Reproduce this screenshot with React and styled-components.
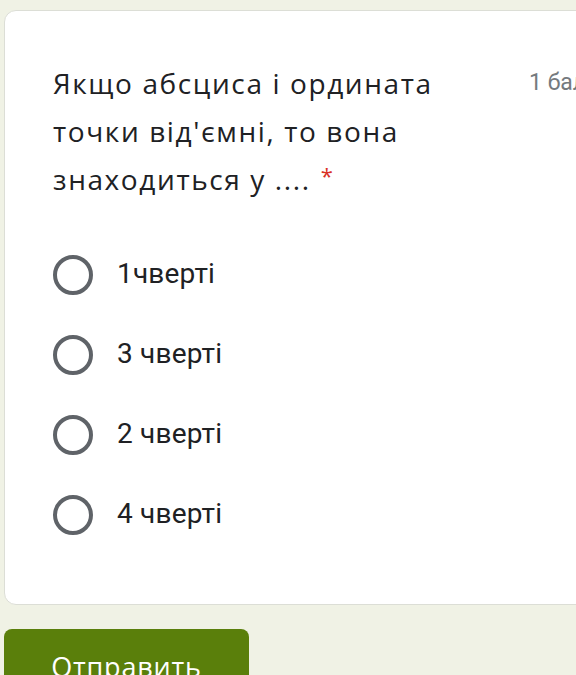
import React, { useState } from "react";
import styled, { createGlobalStyle } from "styled-components";

const opciones = ["1чверті", "3 чверті", "2 чверті", "4 чверті"];

const App = () => {
  const [elegida, setElegida] = useState(null);

  return (
    <>
      <Global />
      <Pagina>
        <Tarjeta>
          <Cabecera>
            <Pregunta>
              Якщо абсциса і ордината точки від'ємні, то вона знаходиться у ....
              <Asterisco>*</Asterisco>
            </Pregunta>
            <Puntos>1 бал</Puntos>
          </Cabecera>
          <Lista>
            {opciones.map((texto, i) => (
              <Opcion key={texto} onClick={() => setElegida(i)}>
                <Radio activo={elegida === i} />
                <Etiqueta>{texto}</Etiqueta>
              </Opcion>
            ))}
          </Lista>
        </Tarjeta>
        <Boton type="button">Отправить</Boton>
      </Pagina>
    </>
  );
};

const Global = createGlobalStyle`
  body {
    margin: 0;
    background: #f0f2e5;
    font-family: Roboto, "Noto Sans", sans-serif;
    overflow: hidden;
  }
`;

const Pagina = styled.div`
  padding: 10px 0 0 4px;
  display: flex;
  flex-direction: column;
  align-items: flex-start;
`;

const Tarjeta = styled.div`
  box-sizing: border-box;
  width: 640px;
  height: 595px;
  background: #fff;
  border: 1px solid #dcded6;
  border-radius: 12px;
  padding: 48px 0 0 48px;
`;

const Cabecera = styled.div`
  display: flex;
  align-items: flex-start;
`;

const Pregunta = styled.div`
  width: 430px;
  font-family: "Open Sans", Roboto, sans-serif;
  font-size: 28px;
  letter-spacing: 1.6px;
  line-height: 48px;
  color: #202124;
`;

const Asterisco = styled.span`
  color: #d93025;
  margin-left: 10px;
  font-size: 22px;
  line-height: 1;
  vertical-align: 6px;
`;

const Puntos = styled.div`
  margin-left: 46px;
  font-size: 23px;
  line-height: 48px;
  color: #757a7e;
  white-space: nowrap;
`;

const Lista = styled.div`
  margin-top: 32px;
  display: flex;
  flex-direction: column;
`;

const Opcion = styled.label`
  height: 80px;
  display: flex;
  align-items: center;
  gap: 24px;
  cursor: pointer;
`;

const Radio = styled.span`
  box-sizing: border-box;
  width: 40px;
  height: 40px;
  border-radius: 50%;
  border: 4px solid ${(props) => (props.activo ? "#5b7f0c" : "#5f6368")};
  box-shadow: ${(props) => (props.activo ? "inset 0 0 0 6px #fff" : "none")};
  background: ${(props) => (props.activo ? "#5b7f0c" : "transparent")};
`;

const Etiqueta = styled.span`
  font-size: 28px;
  letter-spacing: 0.2px;
  color: #202124;
  margin-top: -3px;
`;

const Boton = styled.button`
  margin-top: 24px;
  width: 245px;
  height: 60px;
  border: none;
  border-radius: 8px;
  background: #5a7f0b;
  color: #fff;
  font-family: "Open Sans", Roboto, sans-serif;
  font-size: 27px;
  letter-spacing: 0.8px;
  padding: 14px 0 0;
  cursor: pointer;
`;

export default App;
